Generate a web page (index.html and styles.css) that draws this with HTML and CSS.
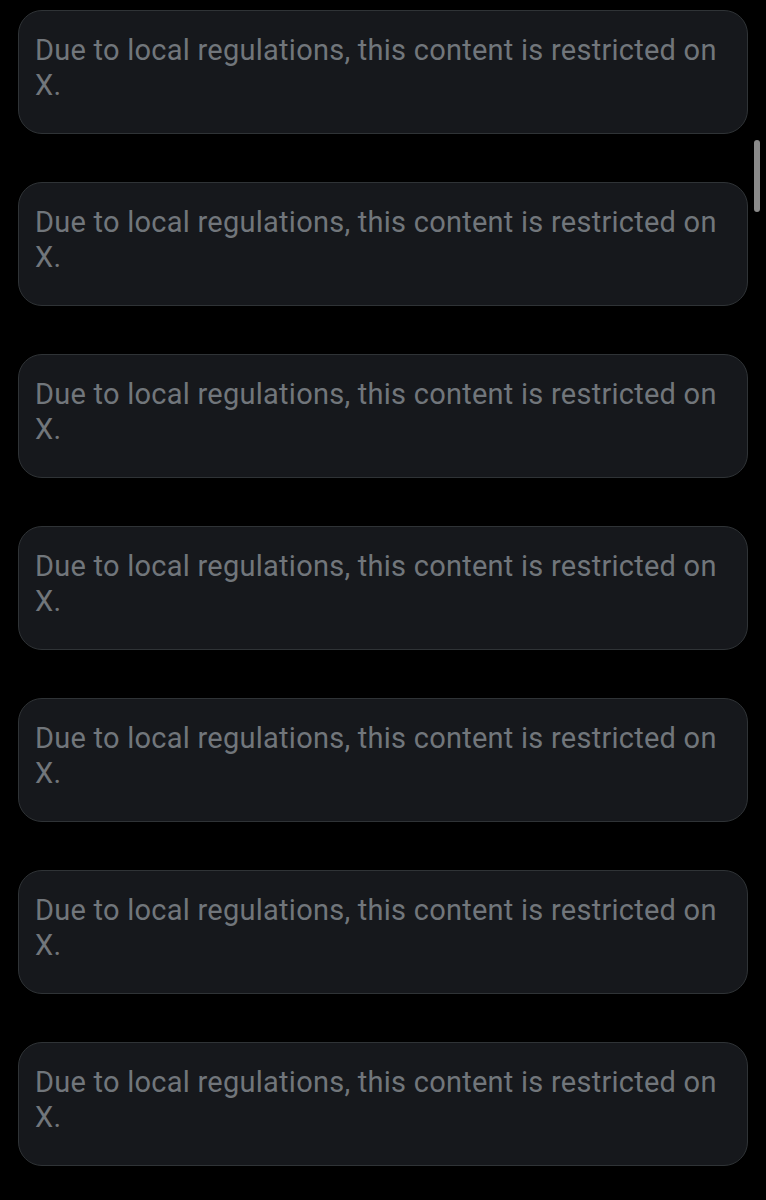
FILE: index.html
```html
<!DOCTYPE html>
<html lang="en">
<head>
  <meta charset="UTF-8">
  <meta name="viewport" content="width=device-width, initial-scale=1.0">
  <title>Restricted</title>
  <link rel="stylesheet" href="styles.css">
</head>
<body>
  <div class="feed">
    <div class="notice">Due to local regulations, this content is restricted on X.</div>
    <div class="notice">Due to local regulations, this content is restricted on X.</div>
    <div class="notice">Due to local regulations, this content is restricted on X.</div>
    <div class="notice">Due to local regulations, this content is restricted on X.</div>
    <div class="notice">Due to local regulations, this content is restricted on X.</div>
    <div class="notice">Due to local regulations, this content is restricted on X.</div>
    <div class="notice">Due to local regulations, this content is restricted on X.</div>
  </div>

  <div class="scrollbar"></div>
</body>
</html>
```

FILE: styles.css
```css
* {
  margin: 0;
  padding: 0;
  box-sizing: border-box;
}
body {
  width: 766px;
  height: 1200px;
  background: #000;
  overflow: hidden;
  font-family: Roboto, "Liberation Sans", sans-serif;
}
.feed {
  display: flex;
  flex-direction: column;
  gap: 48px;
  padding: 10px 18px 0 18px;
}
.notice {
  height: 124px;
  padding: 22px 24px 0 16px;
  background: #16181c;
  border: 1px solid #2f3336;
  border-radius: 24px;
  color: #71767b;
  font-size: 29px;
  line-height: 35px;
  letter-spacing: 0.25px;
}
.scrollbar {
  position: absolute;
  top: 140px;
  left: 754px;
  width: 6px;
  height: 72px;
  border-radius: 3px;
  background: #8a8a8a;
}
```
